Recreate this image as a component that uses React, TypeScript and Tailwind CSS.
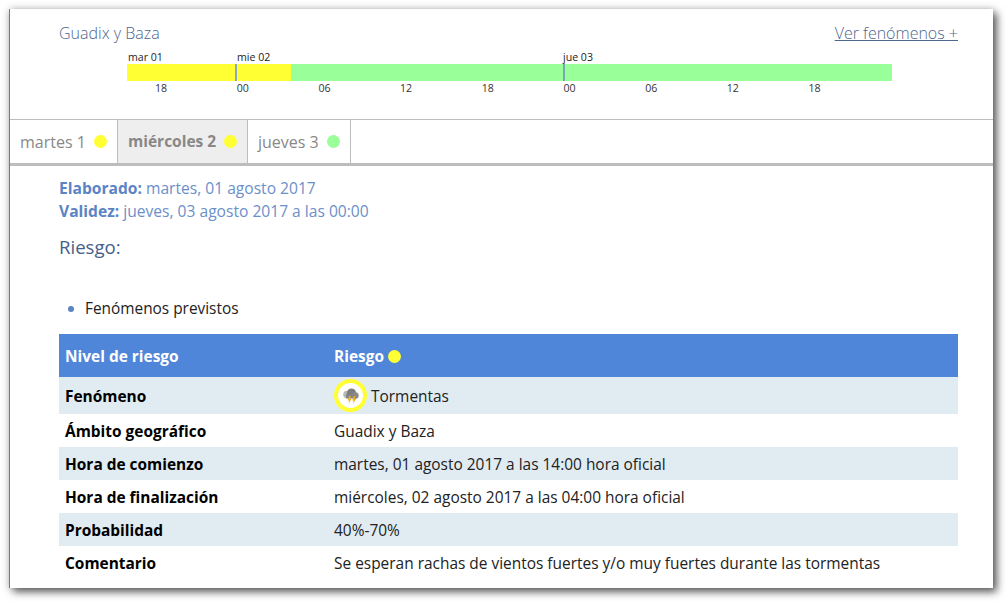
const hours = ["18", "00", "06", "12", "18", "00", "06", "12", "18"];

const rows = [
  { label: "Ámbito geográfico", value: "Guadix y Baza", h: "h-[33px]", bg: "" },
  { label: "Hora de comienzo", value: "martes, 01 agosto 2017 a las 14:00 hora oficial", h: "h-[33px]", bg: "bg-[#e1ebf2]" },
  { label: "Hora de finalización", value: "miércoles, 02 agosto 2017 a las 04:00 hora oficial", h: "h-[33px]", bg: "" },
  { label: "Probabilidad", value: "40%-70%", h: "h-[33px]", bg: "bg-[#e1ebf2]" },
  { label: "Comentario", value: "Se esperan rachas de vientos fuertes y/o muy fuertes durante las tormentas", h: "h-[34px]", bg: "" },
];

const Dot = ({ color }: { color: string }) => (
  <span className={`inline-block w-[13px] h-[13px] rounded-full ${color}`} />
);

const StormIcon = () => (
  <span className="flex items-center justify-center w-[33px] h-[33px] rounded-full border-[4px] border-[#ffff33] bg-white">
    <svg width="18" height="16" viewBox="0 0 18 16">
      <circle cx="5" cy="6.5" r="3.8" fill="#b8b8b8" />
      <circle cx="9.5" cy="5" r="4.6" fill="#7d7d7d" />
      <circle cx="13.5" cy="7.5" r="3.2" fill="#8c8c8c" />
      <rect x="4" y="6" width="10.5" height="4.5" fill="#858585" />
      <path d="M7.4 8 L5.6 12.4 L7.2 12.4 L6.4 16 L9.4 11 L7.8 11 L9 8 Z" fill="#f0b010" />
      <path d="M12 8 L10.2 12.4 L11.8 12.4 L11 16 L14 11 L12.4 11 L13.6 8 Z" fill="#f0b010" />
    </svg>
  </span>
);

export default function App() {
  return (
    <div className="h-[602px] bg-white pt-[9px] pl-[9px] pr-[14px] font-['Open_Sans',sans-serif] overflow-hidden">
      <div className="h-[579px] w-[984px] bg-white border-l border-[#5a7fb8] shadow-[4px_4px_8px_rgba(0,0,0,0.6),0_0_8px_rgba(0,0,0,0.2)] overflow-hidden">
        <div className="h-[111px] border-b border-[#bdbdbd] pl-[49px] pr-[35px] pt-[14px]">
          <div className="flex justify-between text-[16px] leading-[20px] text-[#4f668f] font-light">
            <span>Guadix y Baza</span>
            <a className="underline">Ver fenómenos +</a>
          </div>
          <div className="ml-[68px] mt-[7px] w-[765px] text-[10.6px] leading-[14px] text-[#222]">
            <div className="flex h-[14px]">
              <span className="w-[110px] pl-px">mar 01</span>
              <span className="w-[326px]">mie 02</span>
              <span>jue 03</span>
            </div>
            <div className="flex h-[17px]">
              <div className="w-[110px] bg-[#ffff33] border-r-2 border-[#8fa6c4]" />
              <div className="w-[54px] bg-[#ffff33]" />
              <div className="w-[274px] bg-[#99ff99] border-r-2 border-[#7ba6b8]" />
              <div className="flex-1 bg-[#99ff99]" />
            </div>
            <div className="flex pl-[28px] text-[#333]">
              {hours.map((h, i) => (
                <span key={i} className="w-[81.7px]">{h}</span>
              ))}
            </div>
          </div>
        </div>

        <div className="flex h-[46px] border-b-[3px] border-[#bdbdbd] text-[16px] text-[#888]">
          <div className="flex items-center w-[108px] pl-[10px] border-r border-[#bdbdbd]">
            <span>martes 1</span>
            <span className="ml-[8px] flex"><Dot color="bg-[#ffff33]" /></span>
          </div>
          <div className="flex items-center w-[130px] pl-[10px] border-r border-[#bdbdbd] bg-[#eeeeee] font-bold text-[15.5px]">
            <span>miércoles 2</span>
            <span className="ml-[8px] flex"><Dot color="bg-[#ffff33]" /></span>
          </div>
          <div className="flex items-center w-[103px] pl-[10px] border-r border-[#bdbdbd]">
            <span>jueves 3</span>
            <span className="ml-[8px] flex"><Dot color="bg-[#99ff99]" /></span>
          </div>
        </div>

        <div className="pl-[49px] pr-[35px] pt-[11px]">
          <p className="text-[15.6px] leading-[23px] text-[#6b8fc9]">
            <b className="text-[#5b84c4]">Elaborado:</b> martes, 01 agosto 2017
          </p>
          <p className="text-[15.6px] leading-[23px] text-[#6b8fc9]">
            <b className="text-[#5b84c4]">Validez:</b> jueves, 03 agosto 2017 a las 00:00
          </p>
          <h2 className="mt-[11px] text-[18.6px] leading-[26px] text-[#45608a]">Riesgo:</h2>
          <ul className="mt-[37px] h-[24px] flex items-center text-[15.4px] text-[#222]">
            <li className="flex items-center">
              <span className="ml-[9px] mr-[11px] w-[6px] h-[6px] rounded-full bg-[#5b84c4]" />
              Fenómenos previstos
            </li>
          </ul>
          <div className="mt-[13px] text-[15.45px] text-[#222]">
            <div className="flex items-center h-[43px] pt-[2px] bg-[#4f86d9] text-white font-bold">
              <span className="w-[275px] pl-[6px]">Nivel de riesgo</span>
              <span>Riesgo</span>
              <span className="ml-[4px] flex"><Dot color="bg-[#ffff33]" /></span>
            </div>
            <div className="flex items-center h-[37px] bg-[#e1ebf2]">
              <span className="w-[275px] pl-[6px] pt-[2px] font-bold text-black">Fenómeno</span>
              <StormIcon />
              <span className="ml-[4px] pt-[2px]">Tormentas</span>
            </div>
            {rows.map((r) => (
              <div key={r.label} className={`flex items-center pt-[2px] ${r.h} ${r.bg}`}>
                <span className="w-[275px] pl-[6px] font-bold text-black">{r.label}</span>
                <span>{r.value}</span>
              </div>
            ))}
          </div>
        </div>
      </div>
    </div>
  );
}
